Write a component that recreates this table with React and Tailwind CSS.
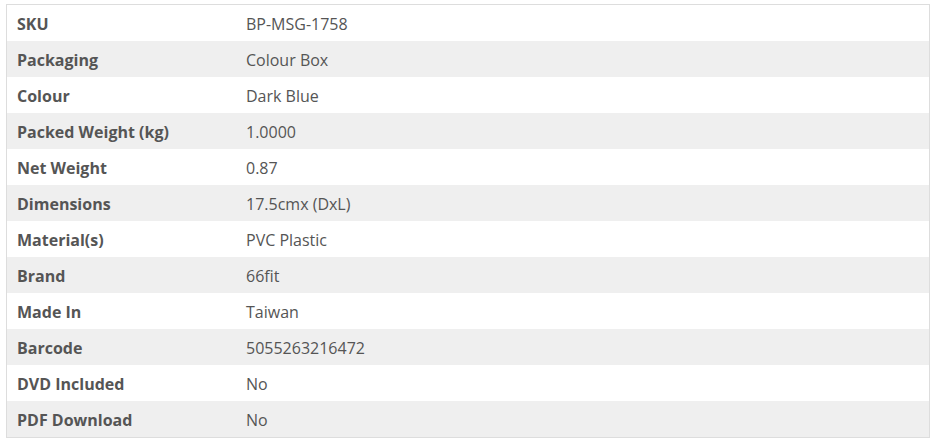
export default function App() {
  const rows = [
    ["SKU", "BP-MSG-1758"],
    ["Packaging", "Colour Box"],
    ["Colour", "Dark Blue"],
    ["Packed Weight (kg)", "1.0000"],
    ["Net Weight", "0.87"],
    ["Dimensions", "17.5cmx (DxL)"],
    ["Material(s)", "PVC Plastic"],
    ["Brand", "66fit"],
    ["Made In", "Taiwan"],
    ["Barcode", "5055263216472"],
    ["DVD Included", "No"],
    ["PDF Download", "No"],
  ];
  return (
    <div className="w-[934px] h-[442px] bg-white pt-[4px] pl-[6px]" style={{ fontFamily: '"Open Sans", sans-serif' }}>
      <div className="w-[924px] border border-[#dddddd] text-[16px] text-[#555555]">
        {rows.map(([k, v], i) => (
          <div key={k} className={`flex h-[36px] items-center pt-[2px] ${i % 2 === 1 ? "bg-[#efefef]" : "bg-white"}`}>
            <div className="w-[229px] pl-[10px] font-bold">{k}</div>
            <div className="flex-1 pl-[10px]">{v}</div>
          </div>
        ))}
      </div>
    </div>
  );
}
